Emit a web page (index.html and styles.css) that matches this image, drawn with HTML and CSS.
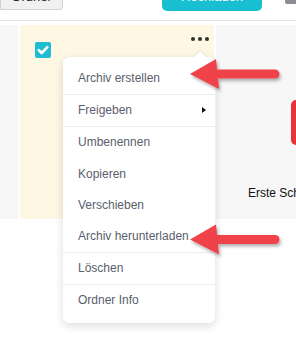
FILE: index.html
```html
<!DOCTYPE html>
<html lang="de">
<head>
    <meta charset="UTF-8">
    <title>Dateien</title>
    <link rel="stylesheet" href="styles.css">
</head>
<body>
    <div class="topbar">
        <button class="btn btn-default">Ordner</button>
        <button class="btn btn-primary">Hochladen</button>
        <span class="btn-gray"></span>
    </div>

    <div class="files">
        <div class="col-side"></div>
        <div class="card">
            <span class="check">
                <svg width="16" height="16" viewBox="0 0 16 16"><path d="M3.8 8.2l2.9 2.8L12.3 5.2" fill="none" stroke="#fff" stroke-width="2.6" stroke-linecap="round" stroke-linejoin="round"/></svg>
            </span>
            <span class="dots"><i></i><i></i><i></i></span>

            <ul class="menu">
                <li class="item">Archiv erstellen</li>
                <li class="sep"></li>
                <li class="item has-sub">Freigeben <span class="caret"></span></li>
                <li class="sep"></li>
                <li class="item">Umbenennen</li>
                <li class="item">Kopieren</li>
                <li class="item">Verschieben</li>
                <li class="item">Archiv herunterladen</li>
                <li class="sep"></li>
                <li class="item">Löschen</li>
                <li class="sep"></li>
                <li class="item">Ordner Info</li>
            </ul>
        </div>
        <div class="col-rest">
            <div class="tile"></div>
            <div class="tile-label">Erste Schritte</div>
        </div>
    </div>

    <!-- Hinweispfeile -->
    <svg class="arrows" width="296" height="346" viewBox="0 0 296 346">
        <defs>
            <filter id="shadow" x="-20%" y="-40%" width="140%" height="180%">
                <feDropShadow dx="1.5" dy="2.5" stdDeviation="1.5" flood-color="#000" flood-opacity="0.3"/>
            </filter>
            <g id="arrow">
                <line x1="214" y1="0" x2="275" y2="0" stroke="#f0424a" stroke-width="9" stroke-linecap="round"/>
                <polygon points="190,0 216,-15 219,15" fill="#f0424a"/>
            </g>
        </defs>
        <use href="#arrow" transform="translate(0,74)" filter="url(#shadow)"/>
        <use href="#arrow" transform="translate(0,239.5)" filter="url(#shadow)"/>
    </svg>
</body>
</html>
```

FILE: styles.css
```css
body {
    margin: 0;
    font-family: "Liberation Sans", Arial, sans-serif;
    background-color: #fff;
    width: 296px;
    height: 346px;
    overflow: hidden;
    position: relative;
}

.topbar {
    display: flex;
    align-items: flex-start;
    height: 20px;
    border-bottom: 1px solid #e4e4e4;
    margin-bottom: 4px;
}

.btn {
    font-family: inherit;
    font-size: 13px;
    padding: 0;
    cursor: pointer;
}

.btn-default {
    width: 63px;
    height: 28px;
    margin-top: -18px;
    background-color: #f0f0f0;
    color: #222;
    border: 1px solid #d2d2d2;
    border-radius: 0 0 3px 0;
}

.btn-primary {
    width: 100px;
    height: 29px;
    margin-top: -18.5px;
    margin-left: 99px;
    background-color: #17bfd0;
    color: #fff;
    border: none;
    border-radius: 5px;
}

.btn-gray {
    width: 11px;
    height: 4px;
    margin-left: 23px;
    background-color: #8d8c94;
    border-radius: 0 0 0 2px;
}

.files {
    display: grid;
    grid-template-columns: 18px 194px 1fr;
    gap: 2px;
    height: 194px;
}

.col-side, .col-rest {
    background-color: #f7f7f7;
}

.card {
    position: relative;
    background-color: #fef7e4;
    display: flex;
    justify-content: space-between;
    align-items: flex-start;
    padding: 12px 5px 0 15px;
}

.check {
    display: block;
    width: 16px;
    height: 16px;
    margin-top: 5px;
    background-color: #1fbcd2;
    border-radius: 2px;
}

.check svg {
    display: block;
}

.dots {
    display: flex;
    gap: 3px;
}

.dots i {
    width: 4px;
    height: 4px;
    border-radius: 50%;
    background-color: #2f2f2f;
}

.menu {
    position: absolute;
    left: 43px;
    top: 32px;
    width: 152px;
    margin: 0;
    padding: 6px 0;
    list-style: none;
    background-color: #fff;
    border-radius: 6px;
    box-shadow: 0 3px 10px rgba(0, 0, 0, 0.14);
}

.menu::before {
    content: "";
    position: absolute;
    top: -4px;
    left: 132px;
    width: 10px;
    height: 10px;
    background-color: #fff;
    transform: rotate(45deg);
    box-shadow: -1px -1px 2px rgba(0, 0, 0, 0.06);
}

.item {
    position: relative;
    height: 31.2px;
    line-height: 31px;
    padding-left: 15px;
    font-size: 12px;
    color: #5a5e6c;
}

.sep {
    height: 1px;
    background-color: #ececec;
}

.caret {
    position: absolute;
    right: 9px;
    top: 12px;
    width: 0;
    height: 0;
    border-top: 3px solid transparent;
    border-bottom: 3px solid transparent;
    border-left: 4px solid #111;
}

.col-rest {
    overflow: hidden;
    padding-left: 32px;
}

.tile {
    width: 60px;
    height: 45px;
    margin: 75px 0 0 43px;
    background-color: #e8323c;
    border-radius: 5px;
}

.tile-label {
    margin-top: 41px;
    font-size: 12px;
    line-height: 14px;
    color: #111;
    white-space: nowrap;
}

.arrows {
    position: absolute;
    left: 0;
    top: 0;
    pointer-events: none;
}
```
